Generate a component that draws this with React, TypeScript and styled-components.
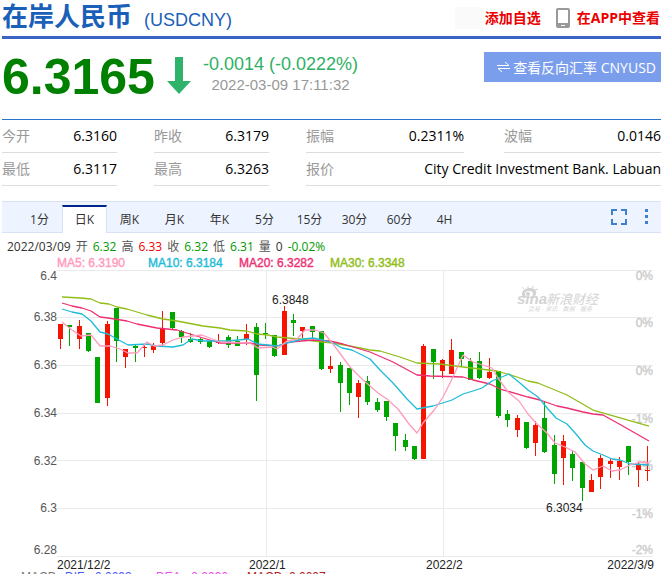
import React, { useState } from "react";
import styled, { createGlobalStyle } from "styled-components";

const UI = `"Open Sans", "Noto Sans CJK SC", sans-serif`;
const ARIAL = `"Liberation Sans", "Noto Sans CJK SC", sans-serif`;

const GlobalStyle = createGlobalStyle`
  * { box-sizing: border-box; }
  html, body { margin: 0; background: #fff; }
  body { font-family: ${UI}; color: #000; }
  button { font: inherit; border: 0; background: none; padding: 0; cursor: pointer; }
  a { text-decoration: none; }
`;

const Page = styled.main`
  height: 100vh;
  overflow: hidden;
`;

const Header = styled.header`
  display: flex;
  align-items: center;
  justify-content: space-between;
  height: 39px;
  margin-left: 2px;
  border-bottom: 3px solid #3b63c6;
  white-space: nowrap;
`;

const Title = styled.h1`
  display: flex;
  align-items: baseline;
  gap: 12px;
  margin: 0;
  color: #1a5fb8;
  font: bold 26px/36px ${ARIAL};
`;

const Code = styled.span`
  font-size: 18px;
  font-weight: normal;
`;

const Actions = styled.nav`
  display: flex;
  align-items: center;
  padding-right: 1px;
  font-size: 14px;
  line-height: 22px;
`;

const Placeholder = styled.span`
  width: 28px;
  height: 22px;
  margin-right: 2px;
  background: #fafafa;
`;

const ActionLink = styled.a`
  color: #eb0000;
  font-weight: bold;
`;

const PhoneIcon = styled.svg`
  margin: 0 7px 0 15px;
`;

const Quote = styled.section`
  display: flex;
  align-items: flex-start;
  height: 80px;
  margin-left: 2px;
  padding-top: 13px;
  white-space: nowrap;
`;

const Price = styled.strong`
  color: #008000;
  font: bold 50px/50px ${ARIAL};
`;

const Arrow = styled.svg`
  margin: 5px 12px 0;
`;

const Change = styled.div`
  display: flex;
  flex-direction: column;
  align-items: center;
  font-family: ${ARIAL};
`;

const Delta = styled.span`
  color: #2fb065;
  font-size: 18px;
  line-height: 24px;
`;

const Timestamp = styled.time`
  color: #999;
  font-size: 15px;
  line-height: 17px;
`;

const ReverseLink = styled.a`
  display: flex;
  align-items: center;
  gap: 3px;
  height: 30px;
  margin-left: auto;
  padding: 0 5px 0 13px;
  background: #7b9eec;
  color: #fff;
  font-size: 14px;
`;

const Stats = styled.dl`
  display: grid;
  grid-template-columns: 115fr 37px 115fr 37px 158fr 40px 157fr;
  margin: 0 0 15px 2px;
  border-top: 1px solid #2a75c9;
`;

const Stat = styled.div<{ $column: string }>`
  display: flex;
  justify-content: space-between;
  grid-column: ${(p) => p.$column};
  height: 33px;
  border-bottom: 1px solid #ddd;
  font-size: 14px;
  line-height: 32px;
  white-space: nowrap;
`;

const StatName = styled.dt`
  color: #999;
`;

const StatValue = styled.dd`
  margin: 0;
`;

const TabBar = styled.div`
  display: flex;
  align-items: stretch;
  height: 32px;
  margin-left: 2px;
  padding-left: 15px;
  border: solid #d7e3f5;
  border-width: 1px 0;
  background: #edf4ff;
`;

const Tab = styled.button<{ $active: boolean }>`
  width: 45px;
  margin: 3px 0 -1px;
  border: solid transparent;
  border-width: 2px 1px 0;
  border-color: ${(p) => (p.$active ? "#00268c #d7e3f5" : "transparent")};
  background: ${(p) => (p.$active ? "#fff" : "none")};
  color: #333;
  font-size: 12px;
  line-height: 24px;
`;

const Tools = styled.div`
  display: flex;
  align-items: center;
  gap: 18px;
  margin-left: auto;
  padding-right: 13px;
`;

const ToolButton = styled.button`
  display: flex;
`;

const Readout = styled.p`
  display: flex;
  gap: 5px;
  margin: 0;
  padding: 5px 0 0 7px;
  color: #333;
  font-size: 12px;
  line-height: 18px;
  white-space: nowrap;
`;

const Tone = styled.span<{ $color: string }>`
  color: ${(p) => p.$color};
`;

const Legend = styled.ul`
  display: grid;
  grid-template-columns: repeat(4, 91px);
  margin: 0;
  padding: 0 0 0 57px;
  list-style: none;
  font: 12px/14px ${ARIAL};
  white-space: nowrap;
`;

const LegendItem = styled.li<{ $color: string }>`
  color: ${(p) => p.$color};
  -webkit-text-stroke: 0.4px ${(p) => p.$color};
`;

const Chart = styled.svg`
  display: block;
  width: 100%;
  height: auto;
  font: 12px ${ARIAL};
`;

const MacdRow = styled.div`
  display: grid;
  grid-template-columns: 44px 91px 91px 91px;
  padding-left: 21px;
  font: 12px/12px ${ARIAL};
  white-space: nowrap;
`;

const RED = "#f51400";
const GREEN = "#00a600";

// Each candle: rising flag, then y of high, body top, body bottom and low.
const candles: [number, number, number, number, number][] = [
  [1, 324, 324, 339, 349], [0, 325, 325, 327, 346], [1, 320, 326, 339, 349], [0, 333, 333, 351, 352],
  [0, 357, 357, 403, 403], [1, 321, 324, 398, 406], [0, 308, 308, 341, 362], [1, 349, 349, 357, 368],
  [0, 344, 346, 348, 362], [1, 345, 347, 348, 357], [1, 343, 346, 350, 353], [1, 311, 328, 343, 346],
  [0, 312, 312, 328, 329], [0, 330, 331, 337, 343], [0, 333, 339, 342, 343], [0, 338, 339, 342, 344],
  [0, 340, 341, 347, 348], [1, 334, 342, 343, 344], [0, 335, 337, 345, 348], [0, 336, 341, 346, 346],
  [1, 324, 334, 339, 345], [0, 323, 327, 375, 401], [0, 323, 333, 334, 339], [0, 335, 335, 356, 357],
  [1, 306, 311, 355, 355], [0, 314, 320, 323, 336], [1, 327, 327, 331, 338], [0, 326, 326, 332, 338],
  [0, 331, 331, 369, 370], [1, 356, 366, 369, 373], [0, 362, 365, 383, 412], [0, 368, 368, 393, 405],
  [1, 380, 383, 397, 418], [0, 376, 381, 402, 405], [0, 398, 402, 410, 412], [0, 401, 401, 417, 421],
  [0, 423, 423, 436, 451], [0, 434, 440, 447, 451], [0, 446, 446, 459, 460], [1, 344, 346, 459, 459],
  [0, 349, 349, 362, 379], [1, 359, 360, 371, 378], [1, 339, 350, 374, 374], [0, 352, 352, 359, 366],
  [0, 358, 361, 380, 380], [0, 352, 361, 378, 379], [1, 358, 372, 378, 379], [0, 371, 371, 416, 418],
  [0, 410, 414, 420, 427], [1, 415, 418, 430, 437], [0, 422, 422, 448, 449], [1, 421, 425, 443, 456],
  [0, 402, 418, 452, 453], [0, 435, 445, 474, 484], [1, 435, 441, 458, 485], [0, 451, 454, 468, 481],
  [0, 462, 462, 488, 501], [1, 474, 480, 492, 492], [1, 455, 458, 477, 489], [1, 459, 461, 464, 478],
  [1, 457, 461, 467, 480], [0, 446, 446, 462, 475], [1, 463, 464, 470, 487], [1, 446, 470, 471, 481],
];

const averages = [
  {
    label: "MA5: 6.3190",
    color: "#ff9bbd",
    points:
      "62,322 72,330 81,336 91,335 100,346 110,346 120,349 128,353 137,353 147,342 154,346 163,345 173,340 183,337 193,336 202,335 220,342 250,343 258,348 272,347 277,349 287,341 297,339 305,330 315,330 324,333 333,344 350,367 362,379 370,386 378,393 387,399 398,409 409,424 417,433 423,423 435,409 443,397 453,377 463,355 473,362 492,368 498,378 508,392 519,401 528,414 537,424 547,433 555,443 565,447 575,452 585,464 593,470 603,466 612,471 620,470 630,465 640,462 649,463",
  },
  {
    label: "MA10: 6.3184",
    color: "#1fbcd8",
    points:
      "62,309 72,312 82,314 91,321 100,332 108,334 117,339 128,345 147,344 157,346 173,347 183,345 192,339 203,341 228,341 248,339 258,344 277,346 287,343 303,339 313,338 323,340 333,343 342,348 352,350 370,359 380,370 393,383 407,399 417,409 433,406 452,400 463,394 473,391 482,388 492,381 509,374 520,383 528,390 538,397 548,409 556,418 567,424 576,434 585,445 593,451 603,455 612,459 620,460 630,464 649,465",
  },
  {
    label: "MA20: 6.3282",
    color: "#ee2f74",
    points:
      "62,303 72,306 82,308 91,311 100,317 108,318 127,321 137,324 147,326 157,328 177,330 190,334 203,338 220,343 250,343 260,345 277,346 290,342 313,340 330,341 343,344 370,352 393,362 417,375 430,376 463,377 473,380 490,384 500,389 528,397 540,400 557,406 567,408 583,412 593,414 603,415 621,425 649,441",
  },
  {
    label: "MA30: 6.3348",
    color: "#90bd17",
    points:
      "62,297 81,298 91,299 100,303 109,304 117,307 127,309 137,312 147,315 163,319 177,321 203,326 220,328 230,330 247,331 257,334 268,335 277,337 300,339 313,341 333,343 350,346 370,350 380,351 400,357 417,363 440,364 463,367 480,369 497,371 517,377 528,381 538,383 567,395 593,410 607,414 649,426",
  },
];

// Grid line y, price baseline, percent baseline, price and percent labels.
const levels: [number, number, number, string, string][] = [
  [270, 280, 280, "6.4", "0%"],
  [317, 321, 327, "6.38", "0%"],
  [365, 369, 375, "6.36", "0%"],
  [413, 417, 423, "6.34", "-1%"],
  [460, 465, 470, "6.32", "-1%"],
  [508, 512, 518, "6.3", "-1%"],
  [556, 554, 554, "6.28", "-2%"],
];

const stats = [
  { name: "今开", value: "6.3160", column: "1" },
  { name: "昨收", value: "6.3179", column: "3" },
  { name: "振幅", value: "0.2311%", column: "5" },
  { name: "波幅", value: "0.0146", column: "7" },
  { name: "最低", value: "6.3117", column: "1" },
  { name: "最高", value: "6.3263", column: "3" },
  { name: "报价", value: "City Credit Investment Bank. Labuan", column: "5 / -1" },
];

const tabs = ["1分", "日K", "周K", "月K", "年K", "5分", "15分", "30分", "60分", "4H"];

function Watermark() {
  return (
    <g fill="#d3d3d3">
      <path d="M522 294c0-4 4-6 8-6 5 0 7 3 6 6-1 3-4 4-7 4-4 0-7-1-7-4z" />
      <ellipse cx="529" cy="294" rx="4" ry="3" fill="#fff" />
      <circle cx="528" cy="294" r="2" />
      <path d="M524 289l-2-2M528 288l0-2M532 288l2-2M535 290l3-1" stroke="#d3d3d3" />
      <text x="517" y="304" fontSize="15" fontWeight="bold" fontStyle="italic">sina</text>
      <text x="546" y="304" fontSize="13" fontStyle="italic">新浪财经</text>
      <text x="528" y="311" fontSize="6" fontStyle="italic">交易 · 资讯 · 数据 · 服务</text>
    </g>
  );
}

function KLine() {
  return (
    <Chart viewBox="0 270 661 301" role="img" aria-label="在岸人民币日K线">
      <g stroke="#eaeaea" shapeRendering="crispEdges">
        {levels.map(([y]) => (
          <path key={y} d={`M57 ${y + 0.5}H653`} />
        ))}
        <path d="M266.5 270V556M443.5 270V556" />
      </g>
      <g fill="#555" textAnchor="end">
        {levels.map(([y, base, , price]) => (
          <text key={y} x="57" y={base}>{price}</text>
        ))}
      </g>
      <g fill="#ccc" stroke="#ccc" strokeWidth="0.4" textAnchor="end">
        {levels.map(([y, , base, , percent]) => (
          <text key={y} x="653" y={base}>{percent}</text>
        ))}
      </g>
      <Watermark />
      <g shapeRendering="crispEdges">
        {candles.map(([up, high, top, bottom, low], i) => {
          const x = Math.round(60 + i * 9.317);
          return (
            <g key={i} fill={up ? RED : GREEN}>
              <rect x={x} y={high} width="1" height={low - high} />
              <rect x={x - 2} y={top} width="5" height={bottom - top} />
            </g>
          );
        })}
      </g>
      <g fill="none" strokeWidth="1.3" strokeLinejoin="round">
        {[...averages].reverse().map((a) => (
          <polyline key={a.label} points={a.points} stroke={a.color} />
        ))}
      </g>
      <g fill="#222">
        <text x="272" y="304">6.3848</text>
        <text x="546" y="512">6.3034</text>
        <text x="57" y="569">2021/12/2</text>
        <text x="249" y="569">2022/1</text>
        <text x="426" y="569">2022/2</text>
        <text x="654" y="569" textAnchor="end">2022/3/9</text>
      </g>
    </Chart>
  );
}

export default function App() {
  const [active, setActive] = useState("日K");
  return (
    <>
      <GlobalStyle />
      <Page>
        <Header>
          <Title>
            在岸人民币 <Code>(USDCNY)</Code>
          </Title>
          <Actions>
            <Placeholder />
            <ActionLink href="#watch">添加自选</ActionLink>
            <PhoneIcon width="14" height="20" viewBox="0 0 14 20" aria-hidden="true">
              <rect width="14" height="20" rx="2" fill="#999" />
              <rect x="2" y="2" width="10" height="13" fill="#fff" />
              <rect x="5" y="17" width="4" height="1" fill="#fff" />
            </PhoneIcon>
            <ActionLink href="#app">在APP中查看</ActionLink>
          </Actions>
        </Header>

        <Quote>
          <Price>6.3165</Price>
          <Arrow width="24" height="37" viewBox="0 0 24 37" aria-hidden="true">
            <path d="M8 0h8v24h8L12 37 0 24h8z" fill="#2fb36b" />
          </Arrow>
          <Change>
            <Delta>-0.0014 (-0.0222%)</Delta>
            <Timestamp>2022-03-09 17:11:32</Timestamp>
          </Change>
          <ReverseLink href="#cnyusd">
            <svg width="13" height="12" viewBox="0 0 13 12" fill="none" stroke="#fff" aria-hidden="true">
              <path d="M0 4.500H12L8 1M13 7.500H1L5 11" />
            </svg>
            查看反向汇率 CNYUSD
          </ReverseLink>
        </Quote>

        <Stats>
          {stats.map((s) => (
            <Stat key={s.name} $column={s.column}>
              <StatName>{s.name}</StatName>
              <StatValue>{s.value}</StatValue>
            </Stat>
          ))}
        </Stats>

        <TabBar>
          {tabs.map((t) => (
            <Tab key={t} $active={t === active} aria-pressed={t === active} onClick={() => setActive(t)}>
              {t}
            </Tab>
          ))}
          <Tools>
            <ToolButton aria-label="全屏">
              <svg width="16" height="16" viewBox="0 0 16 16" fill="none" stroke="#3f7fd0" strokeWidth="2">
                <path d="M1 6V1H6M10 1H15V6M15 10V15H10M6 15H1V10" />
              </svg>
            </ToolButton>
            <ToolButton aria-label="更多">
              <svg width="3" height="16" viewBox="0 0 3 16" fill="#3f7fd0">
                <path d="M0 0h3v3H0zM0 6h3v3H0zM0 12h3v3H0z" />
              </svg>
            </ToolButton>
          </Tools>
        </TabBar>

        <Readout>
          <span>2022/03/09</span>
          <Tone $color="#555">开</Tone>
          <Tone $color="#009900">6.32</Tone>
          <Tone $color="#555">高</Tone>
          <Tone $color="#f00000">6.33</Tone>
          <Tone $color="#555">收</Tone>
          <Tone $color="#009900">6.32</Tone>
          <Tone $color="#555">低</Tone>
          <Tone $color="#009900">6.31</Tone>
          <Tone $color="#555">量</Tone>
          <span>0</span>
          <Tone $color="#009900">-0.02%</Tone>
        </Readout>
        <Legend>
          {averages.map((a) => (
            <LegendItem key={a.label} $color={a.color}>{a.label}</LegendItem>
          ))}
        </Legend>
        <KLine />
        <MacdRow>
          <Tone $color="#777">MACD</Tone>
          <Tone $color="#4a5cf5">DIF: -0.0093</Tone>
          <Tone $color="#e850e8">DEA: -0.0096</Tone>
          <Tone $color="#b22222">MACD: 0.0007</Tone>
        </MacdRow>
      </Page>
    </>
  );
}
